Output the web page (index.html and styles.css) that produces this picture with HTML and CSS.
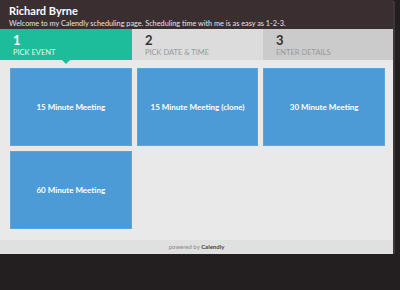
FILE: index.html
```html
<!DOCTYPE html>
<html lang="en">
<head>
    <meta charset="UTF-8">
    <meta name="viewport" content="width=device-width, initial-scale=1.0">
    <title>Richard Byrne - Calendly</title>
    <link rel="stylesheet" href="styles.css">
</head>
<body>
<div class="panel">
    <header class="profile">
        <h1>Richard Byrne</h1>
        <p>Welcome to my Calendly scheduling page. Scheduling time with me is as easy as 1-2-3.</p>
    </header>

    <div class="steps">
        <div class="step active">
            <span class="step-num">1</span>
            <span class="step-label">Pick Event</span>
        </div>
        <div class="step">
            <span class="step-num">2</span>
            <span class="step-label">Pick Date &amp; Time</span>
        </div>
        <div class="step last">
            <span class="step-num">3</span>
            <span class="step-label">Enter Details</span>
        </div>
    </div>

    <div class="events">
        <div class="event">15 Minute Meeting</div>
        <div class="event">15 Minute Meeting (clone)</div>
        <div class="event">30 Minute Meeting</div>
        <div class="event">60 Minute Meeting</div>
    </div>

    <div class="footer">powered by <b>Calendly</b></div>
</div>
</body>
</html>
```

FILE: styles.css
```css
body {
    margin: 0;
    background-color: #231f20;
    font-family: Lato, "Open Sans", sans-serif;
}

.panel {
    width: 393px;
    background-color: #e9e9e9;
    box-shadow: 2px 1px 0 #3c3838;
}

.profile {
    background-color: #3a2e31;
    color: #ffffff;
    padding: 5px 10px 0 9px;
    height: 24px;
}

.profile h1 {
    margin: 0;
    font-size: 11px;
    font-weight: bold;
    line-height: 12px;
}

.profile p {
    margin: 2px 0 0;
    font-size: 7.3px;
    line-height: 9px;
    color: #e8e4e5;
}

.steps {
    display: grid;
    grid-template-columns: 132px 131px 130px;
    height: 31px;
}

.step {
    position: relative;
    display: flex;
    flex-direction: column;
    padding: 5px 0 0 13px;
    background-color: #dcdcdc;
    color: #333333;
}

.step.last {
    background-color: #cbcbcb;
}

.step.active {
    background-color: #1dbc9a;
    color: #ffffff;
}

.step.active::after {
    content: "";
    position: absolute;
    left: 62px;
    bottom: -4px;
    border-left: 4px solid transparent;
    border-right: 4px solid transparent;
    border-top: 4px solid #1dbc9a;
}

.step-num {
    font-size: 13px;
    font-weight: bold;
    line-height: 13px;
}

.step-label {
    margin-top: 2px;
    font-size: 7.5px;
    line-height: 8px;
    text-transform: uppercase;
    color: #999999;
}

.step.active .step-label {
    color: #e4f7f2;
}

.events {
    display: grid;
    grid-template-columns: repeat(3, 1fr);
    gap: 5px;
    padding: 8px 8px 11px 10px;
}

.event {
    height: 76px;
    display: flex;
    align-items: center;
    justify-content: center;
    background-color: #4c9bd6;
    border: 1px solid #5aa7de;
    color: #ffffff;
    font-size: 8px;
    font-weight: bold;
}

.footer {
    height: 14px;
    line-height: 14px;
    background-color: #e0e0e0;
    text-align: center;
    font-size: 6px;
    color: #888888;
}

.footer b {
    color: #444444;
}
```
